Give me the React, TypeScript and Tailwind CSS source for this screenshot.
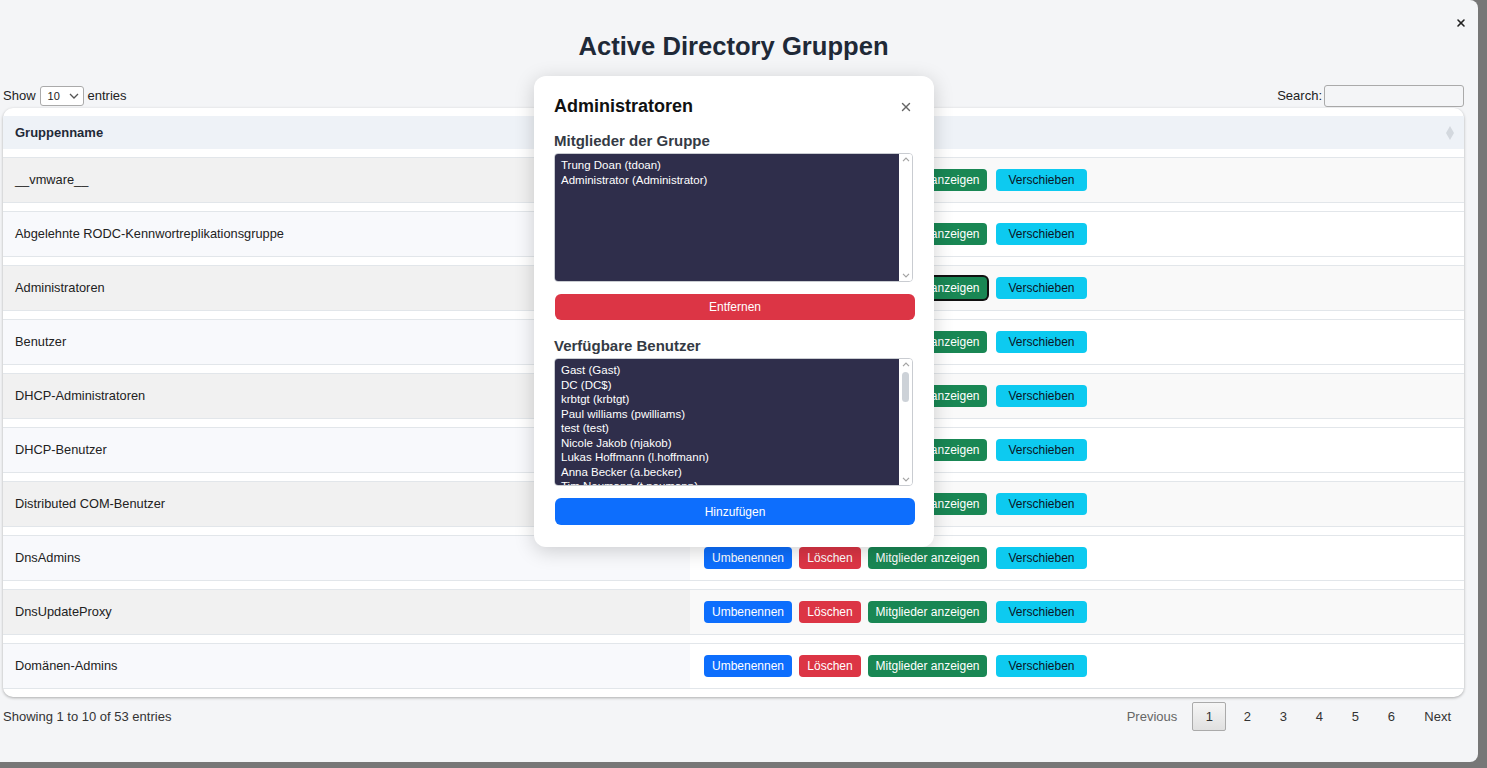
import { X } from "lucide-react";

const groups = [
    "__vmware__",
    "Abgelehnte RODC-Kennwortreplikationsgruppe",
    "Administratoren",
    "Benutzer",
    "DHCP-Administratoren",
    "DHCP-Benutzer",
    "Distributed COM-Benutzer",
    "DnsAdmins",
    "DnsUpdateProxy",
    "Domänen-Admins",
];

const members = ["Trung Doan (tdoan)", "Administrator (Administrator)"];

const available = [
    "Gast (Gast)",
    "DC (DC$)",
    "krbtgt (krbtgt)",
    "Paul williams (pwilliams)",
    "test (test)",
    "Nicole Jakob (njakob)",
    "Lukas Hoffmann (l.hoffmann)",
    "Anna Becker (a.becker)",
    "Tim Neumann (t.neumann)",
];

function GroupRow({ name, index }: { name: string; index: number }) {
    const odd = index % 2 === 0;
    return (
        <div className="flex h-[46px] border-y border-[#e2e6ea]">
            <div
                className={`flex w-[687px] items-center pl-3 text-[12.8px] text-[#222] ${
                    odd ? "bg-[#f1f1f1]" : "bg-[#f8f9fc]"
                }`}
            >
                {name}
            </div>
            <div
                className={`flex flex-1 items-center pl-[14px] text-[12px] ${
                    odd ? "bg-[#f9f9f9]" : "bg-white"
                }`}
            >
                <button className="h-[22px] w-[88px] rounded-[4px] bg-[#0d6efd] text-white">
                    Umbenennen
                </button>
                <button className="ml-[7px] h-[22px] w-[62px] rounded-[4px] bg-[#dc3545] text-white">
                    Löschen
                </button>
                <button
                    className={`ml-[7px] h-[22px] w-[119px] rounded-[4px] bg-[#198754] text-white ${
                        name === "Administratoren" ? "ring-2 ring-[#111]" : ""
                    }`}
                >
                    Mitglieder anzeigen
                </button>
                <button className="ml-[9px] h-[22px] w-[91px] rounded-[4px] bg-[#0dcaf0] text-[#0b1526]">
                    Verschieben
                </button>
            </div>
        </div>
    );
}

// fake native scrollbar, the list is drawn like a <select multiple>
function UserList({
    items,
    height,
    thumb,
}: {
    items: string[];
    height: string;
    thumb?: boolean;
}) {
    return (
        <div
            className={`${height} flex w-[359px] overflow-hidden rounded-[4px] border border-[#c9ccd1] bg-white`}
        >
            <div className="flex-1 overflow-hidden bg-[#2f2e4b] px-[6px] pt-[4px] text-[11.5px] leading-[14.5px] text-white">
                {items.map((item) => (
                    <div key={item} className="whitespace-nowrap">
                        {item}
                    </div>
                ))}
            </div>
            <div className="flex w-[13px] flex-col items-center justify-between bg-white py-[3px]">
                <div className="flex flex-col items-center">
                    <svg width="8" height="5" viewBox="0 0 8 5" fill="none">
                        <path d="M1 4.2L4 1.2l3 3" stroke="#a3a3a3" strokeWidth="1.2" />
                    </svg>
                    {thumb && (
                        <div className="mt-[5px] h-[30px] w-[7px] rounded-full bg-[#cdd2d8]" />
                    )}
                </div>
                <svg width="8" height="5" viewBox="0 0 8 5" fill="none">
                    <path d="M1 0.8l3 3 3-3" stroke="#a3a3a3" strokeWidth="1.2" />
                </svg>
            </div>
        </div>
    );
}

export default function App() {
    return (
        <div className="h-[768px] w-full overflow-hidden bg-[#777] font-['Liberation_Sans',Arial,sans-serif]">
            <div className="relative flex h-[762px] w-[1478px] flex-col rounded-r-lg bg-[#f4f5f7]">
                <button className="absolute right-[11px] top-[17px] text-[#222]">
                    <X className="h-[12px] w-[12px]" strokeWidth={3.2} />
                </button>

                <h1 className="pr-[11px] pt-[31px] text-center text-[25.6px] font-bold leading-[30px] text-[#1f2937]">
                    Active Directory Gruppen
                </h1>

                <div className="ml-[3px] mr-[14px] mt-[24px] flex h-[22px] items-center justify-between text-[13px] text-[#222]">
                    <div className="flex items-center">
                        <span>Show</span>
                        <div className="mx-[4px] flex h-[20px] w-[44px] items-center justify-between rounded-[3px] border border-[#aaa] bg-white pl-[7px] pr-[4px] text-[11px]">
                            <span>10</span>
                            <svg width="10" height="6" viewBox="0 0 10 6" fill="none">
                                <path d="M1 1l4 4 4-4" stroke="#555" strokeWidth="1.3" />
                            </svg>
                        </div>
                        <span>entries</span>
                    </div>
                    <div className="flex items-center">
                        <span>Search:</span>
                        <input className="ml-[2px] h-[22px] w-[140px] rounded-[3px] border border-[#aaa] bg-transparent" />
                    </div>
                </div>

                <div className="ml-[3px] mr-[14px] mt-px flex flex-col gap-2 rounded-[10px] bg-white pb-2 pt-2 shadow-[0_1px_3px_rgba(0,0,0,0.3)]">
                    <div className="flex h-[33px] items-center justify-between bg-[#eef2f7] pl-3 pr-[10px] text-[13px] font-bold text-[#1f2937]">
                        <span>Gruppenname</span>
                        <svg width="8" height="14" viewBox="0 0 8 14" fill="#d3d8de">
                            <path d="M4 0L8 7L4 14L0 7z" />
                        </svg>
                    </div>
                    {groups.map((g, i) => (
                        <GroupRow key={g} name={g} index={i} />
                    ))}
                </div>

                <div className="ml-[3px] mr-[14px] mt-[5px] flex h-[29px] items-center justify-between text-[13px] text-[#333]">
                    <span>Showing 1 to 10 of 53 entries</span>
                    <div className="flex items-center">
                        <button className="px-[14px] text-[#666]">Previous</button>
                        <button className="ml-px mr-[3px] h-[29px] w-[34px] rounded-[2px] border border-[#aaa] bg-linear-to-b from-[#f6f6f6] to-[#e0e0e0]">
                            1
                        </button>
                        {[2, 3, 4, 5, 6].map((n) => (
                            <button key={n} className="mx-px h-[29px] w-[34px]">
                                {n}
                            </button>
                        ))}
                        <button className="pl-[15px] pr-[13px]">Next</button>
                    </div>
                </div>

                <div className="absolute left-[534px] top-[76px] w-[400px] rounded-xl bg-white pb-[22px] pl-5 pr-[19px] pt-5 shadow-[0_4px_20px_rgba(0,0,0,0.18)]">
                    <div className="flex h-[21px] items-center justify-between">
                        <h2 className="text-[18px] font-bold text-[#111]">
                            Administratoren
                        </h2>
                        <button className="mr-[2px] text-[#666]">
                            <X className="h-[14px] w-[14px]" strokeWidth={2.4} />
                        </button>
                    </div>
                    <h3 className="mt-[15px] text-[15px] font-bold leading-[18px] text-[#343a44]">
                        Mitglieder der Gruppe
                    </h3>
                    <div className="mt-[3px]">
                        <UserList items={members} height="h-[129px]" />
                    </div>
                    <button className="ml-px mt-3 h-[26px] w-[360px] rounded-md bg-[#dc3545] text-[12px] text-white">
                        Entfernen
                    </button>
                    <h3 className="mt-[17px] text-[15px] font-bold leading-[18px] text-[#343a44]">
                        Verfügbare Benutzer
                    </h3>
                    <div className="mt-[3px]">
                        <UserList items={available} height="h-[128px]" thumb />
                    </div>
                    <button className="ml-px mt-3 h-[27px] w-[360px] rounded-md bg-[#0d6efd] text-[12px] text-white">
                        Hinzufügen
                    </button>
                </div>
            </div>
        </div>
    );
}
